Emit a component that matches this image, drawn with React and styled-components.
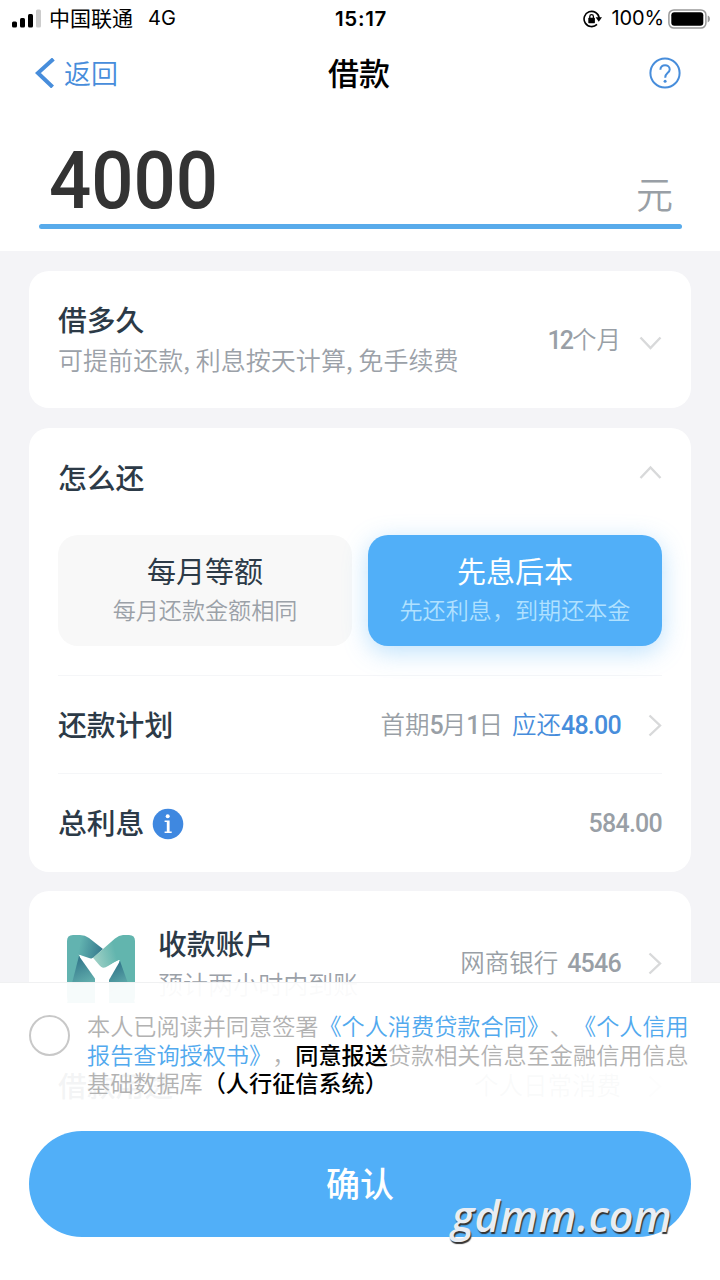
import React, { useState } from "react";
import styled, { createGlobalStyle } from "styled-components";

const GlobalStyle = createGlobalStyle`
  * {
    box-sizing: border-box;
  }

  body {
    margin: 0;
    background-color: #f4f4f7;
    font-family: Roboto, "Noto Sans CJK SC", sans-serif;
    text-spacing-trim: space-all;
  }

  button {
    border: none;
    background: none;
    padding: 0;
    font-family: inherit;
    cursor: pointer;
  }
`;

const Screen = styled.main`
  position: relative;
  width: 720px;
  height: 1280px;
  overflow: hidden;
  background-color: #f4f4f7;
`;

const Header = styled.header`
  height: 251px;
  background-color: #fff;
`;

const StatusBar = styled.div`
  display: grid;
  grid-template-columns: 1fr auto 1fr;
  align-items: center;
  height: 37px;
  padding: 0 9px 0 11px;
  color: #000;
  font-family: Inter, "Noto Sans CJK SC", sans-serif;
  font-size: 20px;
  line-height: 37px;
`;

const StatusGroup = styled.div`
  display: flex;
  align-items: center;
  justify-content: ${({ $end }) => ($end ? "flex-end" : "flex-start")};
`;

const Carrier = styled.span`
  margin-left: 8px;
  font-size: 21px;
`;

const Network = styled.span`
  margin-left: 15px;
  letter-spacing: 0.2px;
`;

const Clock = styled.span`
  font-weight: 600;
  font-size: 20.5px;
  letter-spacing: 0.7px;
`;

const Percent = styled.span`
  margin: 0 4px 0 9px;
  letter-spacing: -0.1px;
`;

const NavBar = styled.nav`
  display: grid;
  grid-template-columns: 1fr auto 1fr;
  align-items: center;
  height: 72px;
  padding: 0 39px 0 35px;
`;

const BackButton = styled.button`
  display: flex;
  align-items: center;
  gap: 8px;
  color: #478ddb;
  font-size: 27px;
  font-weight: 350;
  line-height: 40px;

  span {
    padding-top: 3px;
  }
`;

const NavTitle = styled.h1`
  margin: 0;
  padding: 4px 0 0 2px;
  color: #000;
  font-size: 31px;
  font-weight: 500;
  line-height: 44px;
`;

const HelpButton = styled.button`
  justify-self: end;
  height: 32px;
`;

const AmountField = styled.div`
  width: 643px;
  margin-left: 39px;

  &::after {
    content: "";
    display: block;
    height: 5px;
    border-radius: 3px;
    background-color: #58abeb;
  }
`;

const AmountLine = styled.div`
  display: flex;
  justify-content: space-between;
  align-items: flex-end;
  height: 115px;
  padding: 0 9px 0 10px;
`;

const Amount = styled.span`
  margin-bottom: -4px;
  color: #333;
  font-size: 80px;
  font-weight: 500;
  line-height: 94px;
  transform: scaleX(0.93);
  transform-origin: left;
`;

const Unit = styled.span`
  color: #999fa6;
  font-size: 37px;
  font-weight: 350;
  line-height: 54px;
`;

const Content = styled.section`
  display: flex;
  flex-direction: column;
  gap: 19.5px;
  padding: 20px 29px 0;
`;

const Card = styled.article`
  padding: 0 29px;
  border-radius: 20px;
  background-color: #fff;
`;

const Row = styled.div`
  display: flex;
  align-items: center;
  justify-content: space-between;
  height: ${({ $height }) => $height}px;
  padding: ${({ $shift = 0 }) =>
    $shift > 0 ? `${$shift}px 0 0` : `0 0 ${-$shift}px`};
  border-top: ${({ $divided }) => ($divided ? "1px solid #f5f6f8" : "none")};
`;

const RowText = styled.div`
  display: flex;
  flex-direction: column;
`;

const RowTitle = styled.h2`
  display: flex;
  align-items: center;
  gap: 8px;
  margin: 0;
  color: #2c3a47;
  font-size: 28.8px;
  font-weight: 500;
  line-height: 40px;
`;

const RowHint = styled.p`
  margin: -1px 0 1px;
  color: #9ba1a8;
  font-family: "Noto Sans CJK SC", sans-serif;
  font-size: 25px;
  font-weight: 350;
  line-height: 38px;
  letter-spacing: 0.05px;
  white-space: pre;
`;

const Value = styled.div`
  display: flex;
  align-items: center;
  color: #999fa6;
  font-size: 24.5px;
  font-weight: 350;
  line-height: 36px;
  white-space: pre;

  svg {
    margin-left: 18px;
  }
`;

const Digits = styled.span`
  margin-left: ${({ $gap = 0 }) => $gap}px;
  font-weight: 500;
  font-size: 25px;
  letter-spacing: ${({ $tight }) => ($tight ? "-2px" : "-0.75px")};
`;

const Due = styled.span`
  margin-left: 9px;
  color: #478ddb;
`;

const Options = styled.div`
  display: grid;
  grid-template-columns: 1fr 1fr;
  gap: 16px;
  height: 140px;
  padding-bottom: 29px;
`;

const Option = styled.button`
  display: flex;
  flex-direction: column;
  align-items: center;
  padding-top: 18px;
  border-radius: 20px;
  background-color: ${({ $active }) => ($active ? "#51aff8" : "#f8f8f8")};
  box-shadow: ${({ $active }) =>
    $active ? "0 6px 24px rgba(81, 175, 248, 0.38)" : "none"};
  color: ${({ $active }) => ($active ? "#fff" : "#2c3a47")};

  strong {
    font-size: 29px;
    font-weight: 400;
    line-height: 40px;
  }

  span {
    color: ${({ $active }) => ($active ? "#b0e1ff" : "#9ba1a8")};
    font-size: 23.1px;
    font-weight: 350;
    line-height: 38px;
  }
`;

const Bank = styled.div`
  display: flex;
  gap: 23px;
  align-items: flex-start;
  padding-left: 9px;

  svg {
    margin-top: 10px;
  }
`;

const Footer = styled.footer`
  position: absolute;
  left: 0;
  right: 0;
  bottom: 0;
  height: 298px;
  padding: 28px 29px 0;
  border-top: 1px solid #f0f1f2;
  background-color: rgba(255, 255, 255, 0.945);
`;

const Agreement = styled.div`
  display: flex;
  height: 120px;
  gap: 17px;
`;

const Radio = styled.button`
  flex: none;
  width: 41px;
  height: 41px;
  margin-top: 4px;
  border: 2px solid #c8c8c8;
  border-radius: 50%;
`;

const Terms = styled.p`
  flex: none;
  margin: 0;
  color: #b2b2b2;
  font-family: "Noto Sans CJK SC", sans-serif;
  font-size: 23.15px;
  font-weight: 350;
  line-height: 28.5px;
  white-space: nowrap;

  a {
    color: #51a9ee;
    text-decoration: none;
  }

  b {
    color: #000;
    font-weight: 500;
  }
`;

const ConfirmButton = styled.button`
  display: block;
  width: 662px;
  height: 106px;
  padding-top: 2px;
  border-radius: 53px;
  background-color: #51aff8;
  color: #fff;
  font-size: 34px;
  font-weight: 500;
  line-height: 104px;
`;

const Watermark = styled.span`
  position: absolute;
  right: 48px;
  bottom: 34px;
  color: #e9edf3;
  font-family: "Open Sans", sans-serif;
  font-size: 43px;
  font-style: italic;
  font-weight: 600;
  line-height: 60px;
  letter-spacing: 0.2px;
  text-shadow: 1px 2px 1px #333;
`;

const SignalIcon = () => (
  <svg width="30" height="19" viewBox="0 0 30 19">
    <rect x="1" y="12.5" width="5" height="6" rx="1.5" />
    <rect x="9" y="9" width="5" height="9.5" rx="1.5" />
    <rect x="17" y="5" width="5" height="13.5" rx="1.5" />
    <rect x="25" y="0.5" width="5" height="18" rx="1.5" fill="#ccc" />
  </svg>
);

const RotationLockIcon = () => (
  <svg width="19" height="18" viewBox="0 0 19 18">
    <path
      d="M14 14.4A7.6 7.6 0 1 1 16.2 8"
      fill="none"
      stroke="#000"
      strokeWidth="1.6"
    />
    <path d="M12.6 7.2h6.4l-3.2 4.6z" />
    <rect x="5.3" y="7.8" width="6.6" height="5.4" rx="0.6" />
    <path
      d="M6.8 8.4V6.5a1.8 1.8 0 0 1 3.6 0v1.9"
      fill="none"
      stroke="#000"
      strokeWidth="1.3"
    />
  </svg>
);

const BatteryIcon = () => (
  <svg width="43" height="20" viewBox="0 0 43 20">
    <rect
      x="0.9"
      y="0.9"
      width="37"
      height="18.2"
      rx="5"
      fill="none"
      stroke="#999"
      strokeWidth="1.5"
    />
    <rect x="3.3" y="3.3" width="32" height="13.4" rx="3" />
    <path d="M39.7 6.6c3 .8 3 6 0 6.8z" fill="#999" />
  </svg>
);

const BackIcon = () => (
  <svg width="21" height="30" viewBox="0 0 21 30">
    <path
      d="M18.4 1L2.9 15L17.6 29"
      fill="none"
      stroke="#478ddb"
      strokeWidth="4"
    />
  </svg>
);

const HelpIcon = () => (
  <svg width="32" height="32" viewBox="0 0 32 32" fill="none" stroke="#478ddb">
    <circle cx="16" cy="16" r="14.6" strokeWidth="2" />
    <path
      d="M11.4 12.7C11.4 6.5 20.7 6.8 20.7 12.4C20.7 16 16.2 15.8 16.2 20.7"
      strokeWidth="2"
    />
    <circle cx="16.1" cy="24.3" r="1.5" fill="#478ddb" stroke="none" />
  </svg>
);

const paths = {
  down: "M1.5 7.5L11.5 18L21.5 7.5",
  up: "M1.5 16L11.5 5.5L21.5 16",
  right: "M10.5 1.5L21 11.5L10.5 21.5",
};

const Chevron = ({ direction }) => (
  <svg width="23" height="23" viewBox="0 0 23 23">
    <path d={paths[direction]} fill="none" stroke="#d8d9da" strokeWidth="2.4" />
  </svg>
);

const InfoIcon = () => (
  <svg width="32" height="32" viewBox="0 0 32 32">
    <circle cx="16" cy="16" r="15.3" fill="#3f88e0" />
    <circle cx="15.7" cy="8.2" r="2" fill="#fff" />
    <path
      d="M12.6 12.4h5v11.2h2.1v1.5h-7.1v-1.5h2.2v-9.6h-2.2z"
      fill="#fff"
    />
  </svg>
);

const BankLogo = () => (
  <svg width="68" height="68" viewBox="0 0 68 68">
    <defs>
      <linearGradient id="bankLeft" x1="0" y1="0" x2="1" y2="0.4">
        <stop offset="0.35" stopColor="#62b3b0" />
        <stop offset="0.95" stopColor="#34778c" />
      </linearGradient>
      <linearGradient id="bankRight" x1="0" y1="0.6" x2="1" y2="0.2">
        <stop offset="0.1" stopColor="#a5d3c8" />
        <stop offset="0.6" stopColor="#62b5ae" />
      </linearGradient>
      <linearGradient id="bankFold" x1="0.3" y1="0" x2="0.6" y2="1">
        <stop offset="0" stopColor="#2e7187" />
        <stop offset="0.7" stopColor="#66b3b0" />
      </linearGradient>
    </defs>
    <path
      d="M0 6Q0 0 6 0H13Q18 0 22 3L36 14L25 24L13 20L12 68H6Q0 68 0 62z"
      fill="url(#bankLeft)"
    />
    <path
      d="M68 6Q68 0 62 0H56Q52 0 48 3.5L24 24.5L34 32Q37 34 41 31L52 25L56 68H62Q68 68 68 62z"
      fill="url(#bankRight)"
    />
    <path d="M12 21L29 45V68H0z" fill="url(#bankFold)" />
    <path d="M53 26L68 68H42V45z" fill="url(#bankFold)" />
    <path
      d="M11.5 19.5L19 23.5Q23 25 26 22.8L33 31Q37 35.5 41 32Q47 26.5 53 25L42 40V68H28V42z"
      fill="#fff"
    />
  </svg>
);

const plans = [
  { id: "equal", name: "每月等额", hint: "每月还款金额相同" },
  { id: "interest", name: "先息后本", hint: "先还利息，到期还本金" },
];

export default function App() {
  const [plan, setPlan] = useState("interest");

  return (
    <Screen>
      <GlobalStyle />
      <Header>
        <StatusBar>
          <StatusGroup>
            <SignalIcon />
            <Carrier>中国联通</Carrier>
            <Network>4G</Network>
          </StatusGroup>
          <Clock>15:17</Clock>
          <StatusGroup $end>
            <RotationLockIcon />
            <Percent>100%</Percent>
            <BatteryIcon />
          </StatusGroup>
        </StatusBar>
        <NavBar>
          <BackButton>
            <BackIcon />
            <span>返回</span>
          </BackButton>
          <NavTitle>借款</NavTitle>
          <HelpButton>
            <HelpIcon />
          </HelpButton>
        </NavBar>
        <AmountField>
          <AmountLine>
            <Amount>4000</Amount>
            <Unit>元</Unit>
          </AmountLine>
        </AmountField>
      </Header>

      <Content>
        <Card>
          <Row $height={137}>
            <RowText>
              <RowTitle>借多久</RowTitle>
              <RowHint>可提前还款, 利息按天计算, 免手续费</RowHint>
            </RowText>
            <Row $height={40} $shift={3}>
              <Value>
                <Digits $tight>12</Digits>个月
                <Chevron direction="down" />
              </Value>
            </Row>
          </Row>
        </Card>

        <Card>
          <Row $height={107} $shift={-4}>
            <RowTitle>怎么还</RowTitle>
            <Row $height={40} $shift={-11}>
              <Chevron direction="up" />
            </Row>
          </Row>
          <Options>
            {plans.map((item) => (
              <Option
                key={item.id}
                $active={plan === item.id}
                onClick={() => setPlan(item.id)}
              >
                <strong>{item.name}</strong>
                <span>{item.hint}</span>
              </Option>
            ))}
          </Options>
          <Row $height={98} $shift={3} $divided>
            <RowTitle>还款计划</RowTitle>
            <Value>
              首期<Digits $tight>5</Digits>月<Digits $tight>1</Digits>日
              <Due>
                应还<Digits>48.00</Digits>
              </Due>
              <Chevron direction="right" />
            </Value>
          </Row>
          <Row $height={99} $shift={3} $divided>
            <RowTitle>
              总利息
              <InfoIcon />
            </RowTitle>
            <Value>
              <Digits>584.00</Digits>
            </Value>
          </Row>
        </Card>

        <Card>
          <Row $height={144} $shift={1}>
            <Bank>
              <BankLogo />
              <RowText>
                <RowTitle>收款账户</RowTitle>
                <RowHint>预计两小时内到账</RowHint>
              </RowText>
            </Bank>
            <Value>
              网商银行<Digits $gap={9}>4546</Digits>
              <Chevron direction="right" />
            </Value>
          </Row>
          <Row $height={99} $shift={3} $divided>
            <RowTitle>借款用途</RowTitle>
            <Value>
              个人日常消费
              <Chevron direction="right" />
            </Value>
          </Row>
        </Card>
      </Content>

      <Footer>
        <Agreement>
          <Radio aria-label="同意" />
          <Terms>
            本人已阅读并同意签署<a>《个人消费贷款合同》</a>、<a>《个人信用</a>
            <br />
            <a>报告查询授权书》</a>，<b>同意报送</b>贷款相关信息至金融信用信息
            <br />
            基础数据库<b>（人行征信系统）</b>
          </Terms>
        </Agreement>
        <ConfirmButton>确认</ConfirmButton>
        <Watermark>gdmm.com</Watermark>
      </Footer>
    </Screen>
  );
}
